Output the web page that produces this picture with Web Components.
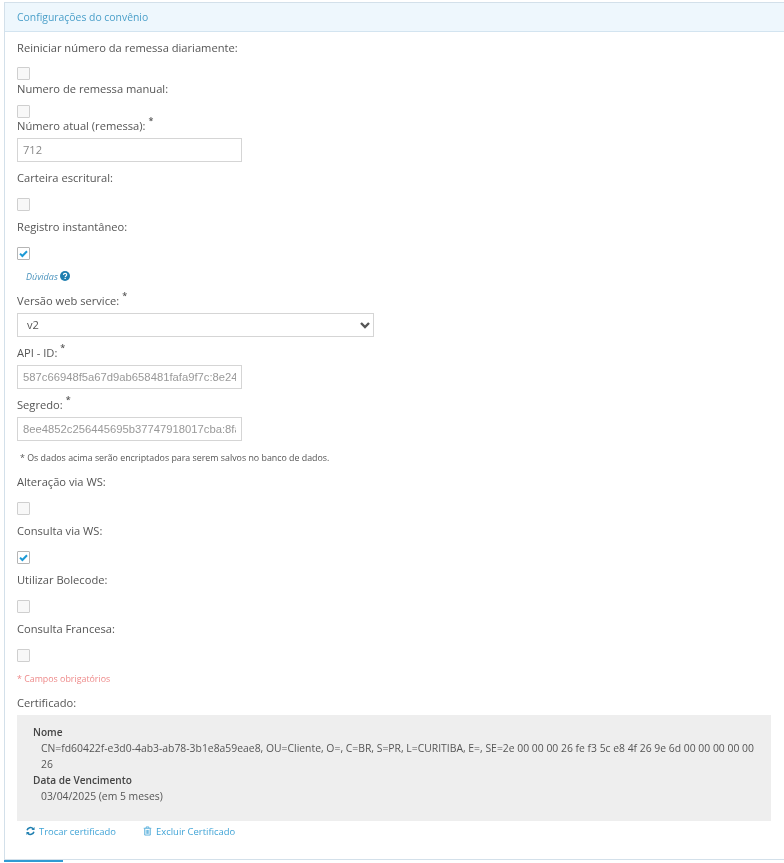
<!DOCTYPE html>
<html lang="pt-BR">
<head>
<meta charset="utf-8">
<title>Configurações do convênio</title>
<style>
  html, body { margin: 0; padding: 0; background: #fff; }
  body { font-family: "Open Sans", "Liberation Sans", sans-serif; font-size: 11.15px; color: #555; width: 784px; height: 863px; overflow: hidden; }
</style>
</head>
<body>
<conv-panel heading="Configurações do convênio">
  <form-field label="Reiniciar número da remessa diariamente:" style="--label-gap:11px;--after:1px"><check-box></check-box></form-field>
  <form-field label="Numero de remessa manual:" style="--label-gap:8px;--after:0px"><check-box></check-box></form-field>
  <form-field label="Número atual (remessa):" required style="--label-gap:4px;--after:8px"><text-box value="712"></text-box></form-field>
  <form-field label="Carteira escritural:" style="--label-gap:12px;--after:8px"><check-box></check-box></form-field>
  <form-field label="Registro instantâneo:" style="--label-gap:12px;--after:8px"><check-box checked></check-box></form-field>
  <help-link>Dúvidas</help-link>
  <form-field label="Versão web service:" required style="--label-gap:4px;--after:8px"><select-box value="v2"></select-box></form-field>
  <form-field label="API - ID:" required style="--label-gap:4px;--after:8px"><text-box mono value="587c66948f5a67d9ab658481fafa9f7c:8e24"></text-box></form-field>
  <form-field label="Segredo:" required style="--label-gap:4px;--after:8px"><text-box mono value="8ee4852c256445695b37747918017cba:8fa"></text-box></form-field>
  <small-note>* Os dados acima serão encriptados para serem salvos no banco de dados.</small-note>
  <form-field label="Alteração via WS:" style="--label-gap:12px;--after:8px"><check-box></check-box></form-field>
  <form-field label="Consulta via WS:" style="--label-gap:12px;--after:8px"><check-box checked></check-box></form-field>
  <form-field label="Utilizar Bolecode:" style="--label-gap:12px;--after:8px"><check-box></check-box></form-field>
  <form-field label="Consulta Francesa:" style="--label-gap:12px;--after:8px"><check-box></check-box></form-field>
  <small-note danger>* Campos obrigatórios</small-note>
  <form-field label="Certificado:" style="--label-gap:4px;--after:0px">
    <cert-box>
      <cert-row name="Nome">CN=fd60422f-e3d0-4ab3-ab78-3b1e8a59eae8, OU=Cliente, O=, C=BR, S=PR, L=CURITIBA, E=, SE=2e 00 00 00 26 fe f3 5c e8 4f 26 9e 6d 00 00 00 00 00 26</cert-row>
      <cert-row name="Data de Vencimento">03/04/2025 (em 5 meses)</cert-row>
    </cert-box>
  </form-field>
  <action-links></action-links>
</conv-panel>

<script>
class ConvPanel extends HTMLElement {
  constructor() {
    super();
    this.attachShadow({mode: 'open'});
    this.shadowRoot.innerHTML = `
      <style>
        :host { display: block; margin: 2px 0 0 4px; height: 858px; box-sizing: border-box;
          border: 1px solid #d3e0ea; border-right: 0; position: relative; background: #fff; filter: blur(.3px); }
        .head { height: 28px; line-height: 28px; padding-left: 12px; background: #eef7fd; color: #4a9fc9;
          border-bottom: 1px solid #d3e4f0; font-size: 10.4px; }
        .body { padding: 8px 13px 0 12px; }
        .tab { position: absolute; left: -1px; bottom: -3px; width: 59px; height: 2px; background: #2f9bd3; }
      </style>
      <div class="head"></div>
      <div class="body"><slot></slot></div>
      <div class="tab"></div>`;
  }
  connectedCallback() {
    this.shadowRoot.querySelector('.head').textContent = this.getAttribute('heading');
  }
}

class FormField extends HTMLElement {
  constructor() {
    super();
    this.attachShadow({mode: 'open'});
    this.shadowRoot.innerHTML = `
      <style>
        :host { display: block; margin-bottom: var(--after, 8px); }
        .lbl { height: 16px; line-height: 16px; margin-bottom: var(--label-gap, 5px); color: #555; white-space: nowrap; }
        sup { font-size: 9px; font-weight: 600; line-height: 0; position: relative; top: -1px; vertical-align: super; margin-left: 3px; }
      </style>
      <div class="lbl"><span class="t"></span></div>
      <slot></slot>`;
  }
  connectedCallback() {
    this.shadowRoot.querySelector('.t').textContent = this.getAttribute('label');
    if (this.hasAttribute('required')) {
      const s = document.createElement('sup');
      s.textContent = '*';
      this.shadowRoot.querySelector('.lbl').appendChild(s);
    }
  }
}

class CheckBox extends HTMLElement {
  constructor() {
    super();
    this.attachShadow({mode: 'open'});
    this.shadowRoot.innerHTML = `
      <style>
        :host { display: block; width: 13px; height: 13px; box-sizing: border-box; border: 1px solid #cfcfcf; background: #f8f8f8; border-radius: 1px; }
        :host([checked]) { background: #fff; border-color: #b5b5b5; }
        svg { display: none; width: 11px; height: 11px; }
        :host([checked]) svg { display: block; }
      </style>
      <svg viewBox="0 0 11 11"><path d="M2 5.6 4.4 8 9 3.2" fill="none" stroke="#1d9ad6" stroke-width="2"/></svg>`;
  }
}

class TextBox extends HTMLElement {
  constructor() {
    super();
    this.attachShadow({mode: 'open'});
    this.shadowRoot.innerHTML = `
      <style>
        :host { display: block; width: 225px; height: 24px; box-sizing: border-box; border: 1px solid #d5d5d5; background: #fff; padding: 0 5px; }
        div { line-height: 22px; color: #888; white-space: nowrap; overflow: hidden; font-size: 11.15px; }
        :host([mono]) div { font-family: "Liberation Sans", Arial, sans-serif; font-size: 11.25px; color: #999; }
      </style>
      <div></div>`;
  }
  connectedCallback() {
    this.shadowRoot.querySelector('div').textContent = this.getAttribute('value');
  }
}

class SelectBox extends HTMLElement {
  constructor() {
    super();
    this.attachShadow({mode: 'open'});
    this.shadowRoot.innerHTML = `
      <style>
        :host { display: flex; align-items: center; justify-content: space-between; width: 357px; height: 24px; box-sizing: border-box;
          border: 1px solid #d5d5d5; background: #fff; padding: 0 3px 1px 9px; color: #555; }
        svg { width: 10px; height: 8px; }
      </style>
      <span></span>
      <svg viewBox="0 0 10 8"><path d="M1 2 5 6 9 2" fill="none" stroke="#555" stroke-width="2.4"/></svg>`;
  }
  connectedCallback() {
    this.shadowRoot.querySelector('span').textContent = this.getAttribute('value');
  }
}

class HelpLink extends HTMLElement {
  constructor() {
    super();
    this.attachShadow({mode: 'open'});
    this.shadowRoot.innerHTML = `
      <style>
        :host { display: flex; align-items: center; gap: 2px; height: 16px; margin: 8px 0 9px 9px; color: #4a93bd; font-style: italic; font-size: 9px; }
        svg { width: 10px; height: 10px; }
      </style>
      <slot></slot>
      <svg viewBox="0 0 10 10"><circle cx="5" cy="5" r="5" fill="#1f7fb0"/><path d="M3.4 3.9C3.5 2.9 4.2 2.4 5.1 2.4 6 2.4 6.7 3 6.7 3.8 6.7 4.9 5.2 5 5.2 6.1" fill="none" stroke="#fff" stroke-width="1.2"/><rect x="4.5" y="6.8" width="1.3" height="1.2" fill="#fff"/></svg>`;
  }
}

class SmallNote extends HTMLElement {
  constructor() {
    super();
    this.attachShadow({mode: 'open'});
    this.shadowRoot.innerHTML = `
      <style>
        :host { display: block; height: 14px; line-height: 14px; margin: 10px 0 9px 3px; font-size: 8.85px; color: #555; white-space: nowrap; }
        :host([danger]) { margin: 10px 0 9px 0; color: #ee8a8a; }
      </style>
      <slot></slot>`;
  }
}

class CertBox extends HTMLElement {
  constructor() {
    super();
    this.attachShadow({mode: 'open'});
    this.shadowRoot.innerHTML = `
      <style>
        :host { display: block; box-sizing: border-box; width: 754px; height: 106px; padding: 9px 16px 0; background: #eee; }
      </style>
      <slot></slot>`;
  }
}

class CertRow extends HTMLElement {
  constructor() {
    super();
    this.attachShadow({mode: 'open'});
    this.shadowRoot.innerHTML = `
      <style>
        :host { display: block; line-height: 16px; font-size: 10.38px; color: #555; }
        b { display: block; font-weight: 600; color: #444; font-size: 10.1px; }
        div { padding-left: 8px; }
      </style>
      <b></b><div><slot></slot></div>`;
  }
  connectedCallback() {
    this.shadowRoot.querySelector('b').textContent = this.getAttribute('name');
  }
}

class ActionLinks extends HTMLElement {
  constructor() {
    super();
    this.attachShadow({mode: 'open'});
    this.shadowRoot.innerHTML = `
      <style>
        :host { display: flex; gap: 27px; margin: 2px 0 0 9px; height: 16px; align-items: center; color: #3fa3d6; font-size: 9.45px; }
        span { display: flex; align-items: center; gap: 4px; }
        svg { width: 9px; height: 10px; }
      </style>
      <span>
        <svg viewBox="0 0 10 10"><path d="M1.2 4.2A3.9 3.9 0 0 1 8 2.6M8.8 5.8A3.9 3.9 0 0 1 2 7.4" fill="none" stroke="#1f7fb0" stroke-width="1.7"/><path d="M9.5 0.5V4H6zM.5 9.5V6H4z" fill="#1f7fb0"/></svg>
        Trocar certificado
      </span>
      <span>
        <svg viewBox="0 0 10 10"><path d="M3.5 1.6V.5h3v1.1M.8 2h8.4M1.9 2.4V9.5h6.2V2.4" fill="none" stroke="#3fa3d6" stroke-width=".9"/><path d="M3.6 3.8v4.4M5 3.8v4.4M6.4 3.8v4.4" stroke="#3fa3d6" stroke-width=".8"/></svg>
        Excluir Certificado
      </span>`;
  }
}

customElements.define('conv-panel', ConvPanel);
customElements.define('form-field', FormField);
customElements.define('check-box', CheckBox);
customElements.define('text-box', TextBox);
customElements.define('select-box', SelectBox);
customElements.define('help-link', HelpLink);
customElements.define('small-note', SmallNote);
customElements.define('cert-box', CertBox);
customElements.define('cert-row', CertRow);
customElements.define('action-links', ActionLinks);
</script>
</body>
</html>
